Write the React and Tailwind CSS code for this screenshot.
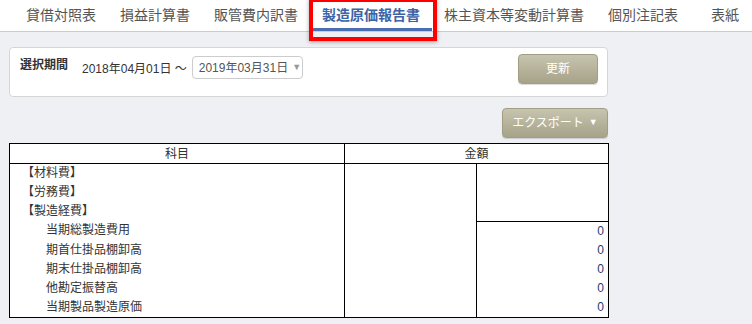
import React from "react";

const tabs = [
  "貸借対照表",
  "損益計算書",
  "販管費内訳書",
  "製造原価報告書",
  "株主資本等変動計算書",
  "個別注記表",
  "表紙",
];

const rows = [
  { label: "【材料費】", sub: false },
  { label: "【労務費】", sub: false },
  { label: "【製造経費】", sub: false },
  { label: "当期総製造費用", sub: true },
  { label: "期首仕掛品棚卸高", sub: true },
  { label: "期末仕掛品棚卸高", sub: true },
  { label: "他勘定振替高", sub: true },
  { label: "当期製品製造原価", sub: true },
];

function TabBar() {
  return (
    <div className="relative h-[32px] bg-white border-b border-[#cccccc] flex pl-[14px]">
      {tabs.map((t, i) => {
        const active = i === 3;
        return (
          <div
            key={t}
            className={
              active
                ? "h-full px-[12px] flex items-center text-[14px] text-[#3d63a6] font-bold border-b-[3px] border-[#4a6fb0] pt-[2px] whitespace-nowrap"
                : i === 6
                ? "h-full px-[12px] ml-[9px] flex items-center text-[14px] text-[#555555] whitespace-nowrap"
                : "h-full px-[12px] flex items-center text-[14px] text-[#555555] whitespace-nowrap"
            }
          >
            {t}
          </div>
        );
      })}
      {/* annotation box */}
      <div className="absolute left-[309px] top-[-2px] w-[128px] h-[43px] border-[4px] border-[#ff0000] shadow-[0_1px_4px_rgba(0,0,0,0.35)] pointer-events-none" />
    </div>
  );
}

function PeriodPanel() {
  return (
    <div className="w-[599px] h-[50px] bg-white border border-[#d6d6d6] rounded-[4px] flex justify-between pl-[10px] pr-[9px] pt-[6px]">
      <div className="flex items-start mt-[2px]">
        <div className="text-[12px] font-bold text-[#333333] leading-[14px] mt-[2px] whitespace-nowrap">
          選択期間
        </div>
        <div className="ml-[14px] h-[23px] flex items-center text-[12px] text-[#333333] mt-[1px] whitespace-nowrap">
          2018年04月01日 ～
        </div>
        <div className="ml-[5px] w-[111px] shrink-0 h-[23px] border border-[#cccccc] rounded-[4px] flex items-center pl-[6px] text-[12px] text-[#555555] whitespace-nowrap">
          2019年03月31日
          <span className="ml-[4px] text-[9px] text-[#999999]">▼</span>
        </div>
      </div>
      <button className="w-[80px] h-[30px] rounded-[4px] border border-[#a29e85] bg-gradient-to-b from-[#c7c4af] to-[#a7a389] text-white text-[12px] shadow-[0_1px_1px_rgba(0,0,0,0.15)]">
        更新
      </button>
    </div>
  );
}

function ReportTable() {
  return (
    <table className="w-[599px] table-fixed border-collapse bg-white border border-black text-[12px] text-[#333333]">
      <colgroup>
        <col className="w-[335px]" />
        <col className="w-[132px]" />
        <col className="w-[132px]" />
      </colgroup>
      <thead>
        <tr>
          <th className="h-[20px] border border-black font-normal p-0 leading-[18px]">
            科目
          </th>
          <th
            colSpan={2}
            className="h-[20px] border border-black font-normal p-0 leading-[18px]"
          >
            金額
          </th>
        </tr>
      </thead>
      <tbody>
        {rows.map((r, i) => (
          <tr key={r.label}>
            <td
              className={
                r.sub
                  ? "h-[19px] p-0 pl-[36px] leading-[19px] border-r border-black whitespace-nowrap"
                  : "h-[19px] p-0 pl-[12px] leading-[19px] border-r border-black whitespace-nowrap"
              }
            >
              {r.label}
            </td>
            {i === 0 && <td rowSpan={8} className="p-0 border-r border-black" />}
            {i === 0 && <td rowSpan={3} className="p-0 border-b border-black" />}
            {i >= 3 && (
              <td className="h-[19px] p-0 pr-[4px] text-right leading-[19px] text-[#1f3a68]">
                0
              </td>
            )}
          </tr>
        ))}
      </tbody>
    </table>
  );
}

export default function App() {
  return (
    <div className="w-[752px] h-[324px] overflow-hidden bg-[#eff0f4] font-['Liberation_Sans','Noto_Sans_CJK_JP',sans-serif]">
      <TabBar />
      <div className="pl-[9px] pt-[15px] flex flex-col w-[608px]">
        <PeriodPanel />
        <div className="flex justify-end mt-[11px]">
          <button className="w-[106px] h-[30px] rounded-[4px] border border-[#a29e85] bg-gradient-to-b from-[#c7c4af] to-[#a7a389] text-white text-[12px] shadow-[0_1px_1px_rgba(0,0,0,0.15)] flex items-center justify-center">
            エクスポート
            <span className="ml-[5px] text-[9px]">▼</span>
          </button>
        </div>
        <div className="mt-[5px]">
          <ReportTable />
        </div>
      </div>
    </div>
  );
}
